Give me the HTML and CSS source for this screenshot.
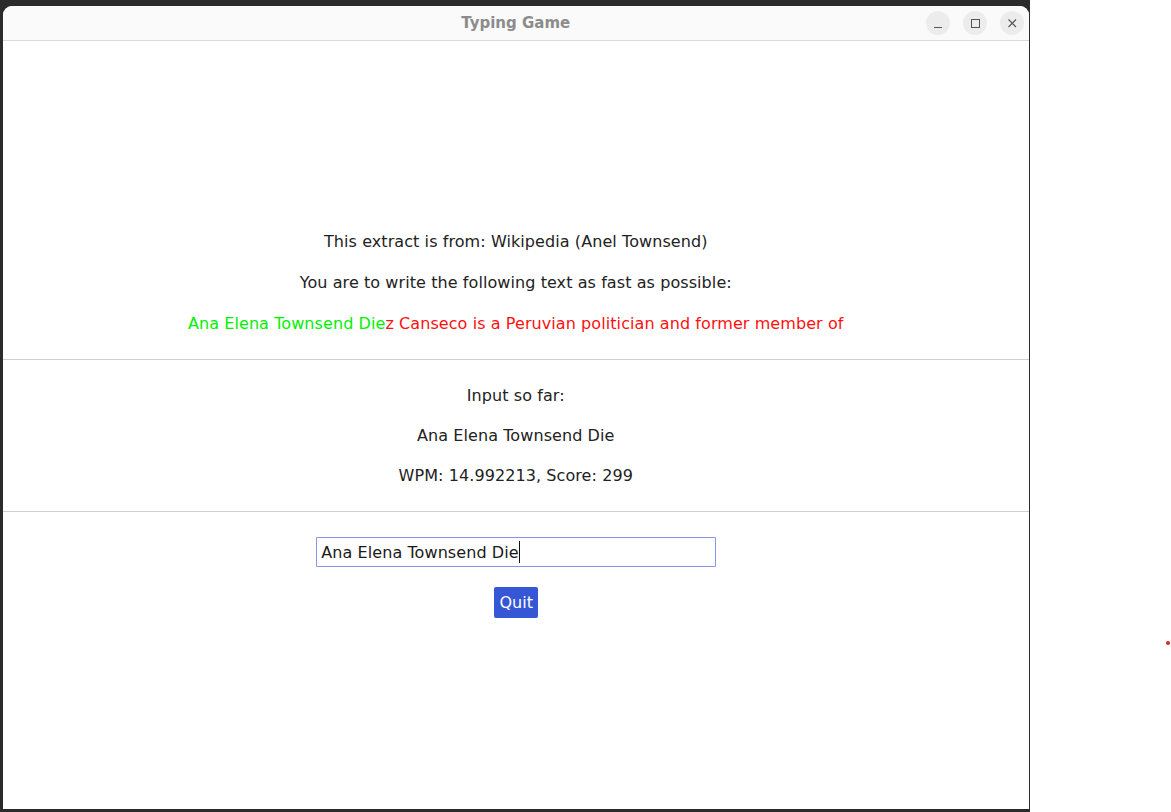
FILE: index.html
```html
<!DOCTYPE html>
<html>
<head>
<meta charset="utf-8">
<link rel="stylesheet" href="styles.css">
</head>
<body>
<div class="desktop">
  <div class="frame">
    <div class="window">
      <div class="titlebar">
        <div class="title">Typing Game</div>
        <div class="controls">
          <div class="ctl"><svg width="24" height="24" viewBox="0 0 24 24"><path d="M8 16.5h8" stroke="#555" stroke-width="1.2" fill="none"/></svg></div>
          <div class="ctl"><svg width="24" height="24" viewBox="0 0 24 24"><rect x="8.5" y="8.5" width="8" height="8" stroke="#555" stroke-width="1" fill="none"/></svg></div>
          <div class="ctl"><svg width="24" height="24" viewBox="0 0 24 24"><path d="M8.5 8.5l7.5 7.5M16 8.5l-7.5 7.5" stroke="#555" stroke-width="1.1" fill="none"/></svg></div>
        </div>
      </div>
      <div class="content">
        <div class="section first">
          <p class="line">This extract is from: Wikipedia (Anel Townsend)</p>
          <p class="line">You are to write the following text as fast as possible:</p>
          <p class="line"><span class="ok">Ana Elena Townsend Die</span><span class="bad">z Canseco is a Peruvian politician and former member of</span></p>
        </div>
        <hr class="sep">
        <div class="section second">
          <p class="line">Input so far:</p>
          <p class="line">Ana Elena Townsend Die</p>
          <p class="line">WPM: 14.992213, Score: 299</p>
        </div>
        <hr class="sep sep-last">
        <div class="controls-area">
          <div class="input">Ana Elena Townsend Die<span class="caret"></span></div>
          <button class="quit">Quit</button>
        </div>
      </div>
    </div>
  </div>
  <div class="dot"></div>
</div>
</body>
</html>
```

FILE: styles.css
```css
html, body {
  margin: 0;
  padding: 0;
  background: #ffffff;
}
.desktop {
  position: relative;
  width: 1171px;
  height: 812px;
  overflow: hidden;
  font-family: "DejaVu Sans", sans-serif;
}
.frame {
  width: 1030px;
  height: 812px;
  box-sizing: border-box;
  background: #2b2b2b;
  padding: 6px 1.5px 3px 3px;
  display: flex;
}
.window {
  flex: 1;
  background: #ffffff;
  border-radius: 9px 9px 0 0;
  overflow: hidden;
  display: flex;
  flex-direction: column;
}
.titlebar {
  height: 34px;
  flex: none;
  background: #fafafa;
  border-bottom: 1px solid #dadada;
  position: relative;
  display: flex;
  align-items: center;
  justify-content: center;
}
.title {
  font-weight: bold;
  font-size: 15px;
  color: #8c8c8c;
}
.controls {
  position: absolute;
  right: 5px;
  top: 5px;
  display: flex;
  gap: 13px;
}
.ctl {
  width: 24px;
  height: 24px;
  border-radius: 50%;
  background: #ececec;
}
.ctl svg { display: block; }
.content {
  flex: 1;
  display: flex;
  flex-direction: column;
  justify-content: center;
  color: #222222;
  font-size: 16px;
  letter-spacing: 0.08px;
}
.section {
  display: flex;
  flex-direction: column;
  align-items: center;
}
.first { gap: 22px; }
.second { gap: 21px; }
.line {
  margin: 0;
  line-height: 19px;
  height: 19px;
  white-space: nowrap;
}
.ok { color: #00f000; }
.bad { color: #ff1010; }
.sep {
  border: none;
  border-top: 1px solid #d0d0d0;
  margin: 26px 0;
  height: 0;
  width: 100%;
}
.sep-last {
  margin-bottom: 25px;
}
.controls-area {
  display: flex;
  flex-direction: column;
  align-items: center;
  gap: 20px;
}
.input {
  width: 400px;
  height: 30px;
  box-sizing: border-box;
  border: 1px solid #8a94e6;
  border-radius: 1px;
  padding: 0 4px;
  display: flex;
  align-items: center;
  color: #1a1a1a;
  font-size: 16px;
  margin-left: 1px;
}
.caret {
  display: inline-block;
  width: 1.5px;
  height: 22px;
  background: #111;
}
.quit {
  width: 44px;
  height: 31px;
  border: none;
  border-radius: 2px;
  background: #3557d6;
  color: #ffffff;
  font-family: "DejaVu Sans", sans-serif;
  font-size: 16px;
  padding: 0;
  margin-left: 1px;
}
.dot {
  position: absolute;
  left: 1166px;
  top: 641px;
  width: 4px;
  height: 4px;
  border-radius: 50%;
  background: #e42020;
}
```
